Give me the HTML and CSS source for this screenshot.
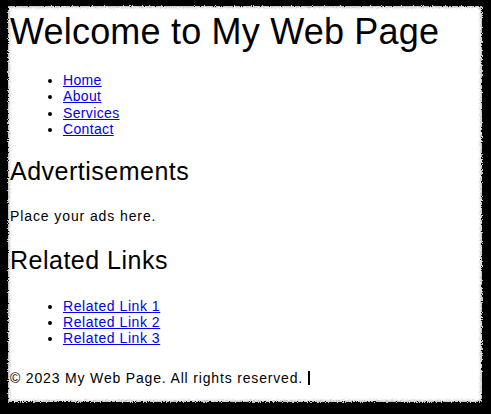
FILE: index.html
```html
<!DOCTYPE html>
<html lang="en">
<head>
<meta charset="utf-8">
<title>My Web Page</title>
<link rel="stylesheet" href="styles.css">
</head>
<body>
<svg class="defs" width="0" height="0" aria-hidden="true">
  <filter id="rough" x="-5%" y="-5%" width="110%" height="110%">
    <feTurbulence type="fractalNoise" baseFrequency="0.9" numOctaves="2" seed="3" result="noise"/>
    <feDisplacementMap in="SourceGraphic" in2="noise" scale="4" xChannelSelector="R" yChannelSelector="G"/>
  </filter>
</svg>
<div class="page">
  <header class="site-header">
    <h1 class="title">Welcome to My Web Page</h1>
    <nav>
      <ul class="menu">
        <li><a href="#">Home</a></li>
        <li><a href="#">About</a></li>
        <li><a href="#">Services</a></li>
        <li><a href="#">Contact</a></li>
      </ul>
    </nav>
  </header>
  <aside class="sidebar">
    <section class="block">
      <h2 class="block-title">Advertisements</h2>
      <p class="ads">Place your ads here.</p>
    </section>
    <section class="block">
      <h2 class="block-title related">Related Links</h2>
      <ul class="menu links">
        <li><a href="#">Related Link 1</a></li>
        <li><a href="#">Related Link 2</a></li>
        <li><a href="#">Related Link 3</a></li>
      </ul>
    </section>
  </aside>
  <footer class="site-footer">
    <p class="copy">© 2023 My Web Page. All rights reserved.<span class="caret"></span></p>
  </footer>
</div>
</body>
</html>
```
FILE: styles.css
```css
html, body {
  margin: 0;
  padding: 0;
  background: #000;
}

body {
  font-family: "Liberation Sans", Arial, sans-serif;
  font-size: 14px;
  line-height: 16.3px;
  color: #000;
  overflow: hidden;
  height: 414px;
}

.defs {
  position: absolute;
  width: 0;
  height: 0;
}

.page {
  position: relative;
  isolation: isolate;
  margin: 6px 0 0 8px;
  width: 474px;
  height: 396px;
  padding: 0 0 0 2px;
  box-sizing: border-box;
  overflow: visible;
}

.page::before {
  content: "";
  position: absolute;
  inset: 0;
  z-index: -1;
  background: #fff;
  box-shadow: inset 0 0 3px 1px #aaa;
  filter: url(#rough);
}

.title {
  margin: 0;
  padding-top: 5px;
  font-size: 36px;
  line-height: 41px;
  font-weight: normal;
  letter-spacing: 0.2px;
}

.menu {
  margin: 20px 0 0;
  padding: 0 0 0 53px;
  list-style: disc;
  letter-spacing: 0.35px;
}

.menu a {
  color: #0000ee;
}

.block-title {
  margin: 19.5px 0 0;
  font-size: 25px;
  line-height: 29px;
  font-weight: normal;
  letter-spacing: 0.5px;
}

.related {
  margin-top: 21.7px;
}

.ads {
  margin: 22px 0 0;
  letter-spacing: 0.9px;
}

.links {
  margin-top: 23px;
  letter-spacing: 0.55px;
}

.copy {
  margin: 23px 0 0;
  letter-spacing: 0.83px;
}

.caret {
  display: inline-block;
  width: 2px;
  height: 14px;
  margin-left: 5px;
  background: #000;
  vertical-align: -2px;
}
```
